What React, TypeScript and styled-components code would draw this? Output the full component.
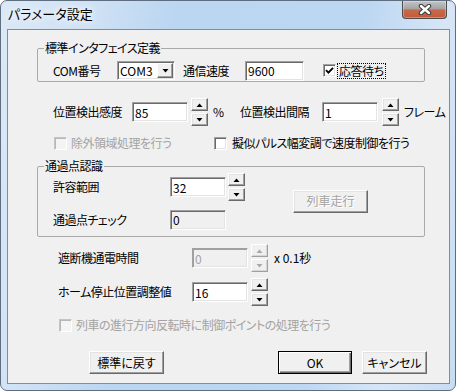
import React from "react";
import styled, {createGlobalStyle} from "styled-components";

const GlobalStyle = createGlobalStyle`
	html,
	body {
		margin: 0;
		padding: 0;
		background: #ffffff;
	}
	* {
		box-sizing: border-box;
	}
`;

const uiFont = `"Noto Sans CJK JP", "Liberation Sans", sans-serif`;

const Window = styled.div`
	width: 456px;
	height: 391px;
	display: flex;
	flex-direction: column;
	border: 1px solid #5e6e80;
	border-radius: 7px;
	overflow: hidden;
	background: linear-gradient(
		100deg,
		#dce9f6 0%,
		#cfe1f4 18%,
		#bad6f1 34%,
		#bcd7f2 70%,
		#d7e6f6 86%,
		#c8dcf2 100%
	);
	font-family: ${uiFont};
	font-size: 12px;
	line-height: 14px;
	letter-spacing: -0.5px;
	font-feature-settings: "palt";
	color: #000;
`;

const TitleBar = styled.div`
	height: 28px;
	flex: none;
	display: flex;
	justify-content: space-between;
	align-items: flex-start;
	padding: 0 8px 0 7px;
`;

const Title = styled.div`
	margin-top: 5px;
	font-size: 13px;
	line-height: 16px;
	letter-spacing: 0;
	text-shadow: 0 0 6px #fff, 0 0 10px #fff;
`;

const CloseButton = styled.div`
	width: 45px;
	height: 18px;
	display: flex;
	align-items: center;
	justify-content: center;
	border: 1px solid #4d4d4d;
	border-top: none;
	border-radius: 0 0 4px 4px;
	background: linear-gradient(
		#c4c4c4 0%,
		#a4a4a4 46%,
		#c96a4a 52%,
		#c35a38 100%
	);
	box-shadow: inset 0 0 0 1px rgba(255, 255, 255, 0.3);
`;

const Client = styled.div`
	flex: 1;
	margin: 0 5px 6px 6px;
	display: flex;
	flex-direction: column;
	background: #f0f0f0;
	border: 1px solid #7d8ea2;
`;

const GroupBox = styled.fieldset<{$top: number}>`
	margin: ${(p) => p.$top}px 0 0 29px;
	width: 388px;
	min-inline-size: 0;
	padding: 0;
	border: 1px solid #a9a9a9;
	border-radius: 2px;
`;

const Legend = styled.legend`
	margin-left: 6px;
	padding: 0 1px;
	line-height: 14px;
`;

const Row = styled.div<{$top: number; $left: number; $h: number}>`
	display: flex;
	align-items: center;
	height: ${(p) => p.$h}px;
	margin-top: ${(p) => p.$top}px;
	padding-left: ${(p) => p.$left}px;
	flex: none;
`;

const GroupBody = styled.div`
	display: flex;
	align-items: center;
	padding: 0 0 7px 15px;
`;

const Column = styled.div`
	display: flex;
	flex-direction: column;
`;

const Label = styled.span<{$w?: number; $gap?: number; $off?: boolean}>`
	flex: none;
	width: ${(p) => (p.$w ? `${p.$w}px` : "auto")};
	margin-left: ${(p) => p.$gap ?? 0}px;
	color: ${(p) => (p.$off ? "#a3a3a3" : "#000")};
	white-space: pre;
`;

const Unit = styled(Label)`
	letter-spacing: 0;
`;

const FocusLabel = styled.span`
	margin-left: 2px;
	padding: 0 1px;
	outline: 1px dotted #000;
	white-space: nowrap;
`;

const Edit = styled.input<{$w: number}>`
	flex: none;
	width: ${(p) => p.$w}px;
	height: 20px;
	padding: 0 2px;
	font: inherit;
	letter-spacing: 0;
	color: #000;
	background: #fff;
	border: 1px solid;
	border-color: #a0a0a0 #fff #fff #a0a0a0;
	box-shadow: inset 1px 1px 0 #696969, inset -1px -1px 0 #e3e3e3;
	outline: none;

	&:read-only {
		background: #f0f0f0;
	}

	&:disabled {
		color: #a3a3a3;
		box-shadow: inset 1px 1px 0 #a0a0a0, inset -1px -1px 0 #e3e3e3;
	}
`;

const ComboBox = styled.div<{$w: number}>`
	flex: none;
	width: ${(p) => p.$w}px;
	height: 19px;
	display: flex;
	align-items: stretch;
	background: #fff;
	border: 1px solid;
	border-color: #a0a0a0 #fff #fff #a0a0a0;
	box-shadow: inset 1px 1px 0 #696969, inset -1px -1px 0 #e3e3e3;
	padding: 1px 1px 1px 2px;
	letter-spacing: 0;
`;

const ComboText = styled.span`
	flex: 1;
	display: flex;
	align-items: center;
`;

const DropButton = styled.span`
	width: 16px;
	display: flex;
	align-items: center;
	justify-content: center;
	background: #f0f0f0;
	border: 1px solid;
	border-color: #fff #696969 #696969 #fff;
	box-shadow: inset -1px -1px 0 #a0a0a0;
`;

const SpinBox = styled.div<{$gap: number}>`
	flex: none;
	display: flex;
	flex-direction: column;
	gap: 2px;
	margin-left: ${(p) => p.$gap}px;
`;

const SpinButton = styled.button`
	width: 17px;
	height: 13px;
	padding: 0;
	display: flex;
	align-items: center;
	justify-content: center;
	color: #000;
	background: #f0f0f0;
	border: 1px solid;
	border-color: #fff #696969 #696969 #fff;
	box-shadow: inset -1px -1px 0 #a0a0a0, inset 1px 1px 0 #e3e3e3;

	&:disabled {
		color: #a8a8a8;
		border-color: #fff #a0a0a0 #a0a0a0 #fff;
		box-shadow: inset -1px -1px 0 #d6d6d6;
	}
`;

const CheckItem = styled.label<{$w?: number; $gap: number; $left?: number}>`
	flex: none;
	display: flex;
	align-items: center;
	width: ${(p) => (p.$w ? `${p.$w}px` : "auto")};
	gap: ${(p) => p.$gap}px;
	margin-left: ${(p) => p.$left ?? 0}px;
`;

const CheckBox = styled.span<{$off?: boolean}>`
	flex: none;
	width: 13px;
	height: 13px;
	display: flex;
	align-items: center;
	justify-content: center;
	background: ${(p) => (p.$off ? "#f4f4f4" : "#fff")};
	border: 1px solid;
	border-color: ${(p) =>
		p.$off ? "#c4c4c4 #fff #fff #c4c4c4" : "#a0a0a0 #fff #fff #a0a0a0"};
	box-shadow: ${(p) =>
		p.$off
			? "inset 1px 1px 0 #b8b8b8"
			: "inset 1px 1px 0 #696969, inset -1px -1px 0 #e3e3e3"};
`;

const PushButton = styled.button<{$w: number; $default?: boolean; $gap?: string}>`
	flex: none;
	width: ${(p) => p.$w}px;
	height: 23px;
	margin-left: ${(p) => p.$gap ?? "0"};
	padding: 0;
	font: inherit;
	color: #000;
	background: #f0f0f0;
	border: 1px solid;
	border-color: ${(p) =>
		p.$default ? "#000" : "#fff #696969 #696969 #fff"};
	box-shadow: ${(p) =>
		p.$default
			? "inset 1px 1px 0 #fff, inset -1px -1px 0 #696969, inset -2px -2px 0 #a0a0a0"
			: "inset -1px -1px 0 #a0a0a0, inset 1px 1px 0 #e3e3e3"};

	&:disabled {
		color: #a3a3a3;
		text-shadow: 1px 1px 0 #fff;
	}
`;

const ButtonBar = styled.div`
	display: flex;
	align-items: center;
	margin-top: 19px;
	padding: 0 22px 0 81px;
`;

const Arrow = ({down}: {down?: boolean}) => (
	<svg width="7" height="4" viewBox="0 0 7 4">
		<polygon
			points={down ? "0.5,0 6.5,0 3.5,3.5" : "0.5,4 6.5,4 3.5,0.5"}
			fill="currentColor"
		/>
	</svg>
);

const Spin = ({gap, disabled}: {gap: number; disabled?: boolean}) => (
	<SpinBox $gap={gap}>
		<SpinButton disabled={disabled}>
			<Arrow />
		</SpinButton>
		<SpinButton disabled={disabled}>
			<Arrow down />
		</SpinButton>
	</SpinBox>
);

const Check = () => (
	<svg width="9" height="9" viewBox="0 0 9 9">
		<polyline
			points="1,4.2 3.4,6.6 8,1.8"
			fill="none"
			stroke="#000"
			strokeWidth="1.9"
		/>
	</svg>
);

const CloseGlyph = () => (
	<svg width="14" height="11" viewBox="0 0 14 11">
		<path d="M3 2 L11 9 M11 2 L3 9" stroke="#3b3b3b" strokeWidth="4.4" strokeLinecap="round" />
		<path d="M3 2 L11 9 M11 2 L3 9" stroke="#fff" strokeWidth="2.4" strokeLinecap="round" />
	</svg>
);

export default function App() {
	return (
		<>
			<GlobalStyle />
			<Window>
				<TitleBar>
					<Title>パラメータ設定</Title>
					<CloseButton>
						<CloseGlyph />
					</CloseButton>
				</TitleBar>
				<Client>
					<GroupBox $top={11}>
						<Legend>標準インタフェイス定義</Legend>
						<Row $top={6} $left={15} $h={19}>
							<Label $w={64}>COM番号</Label>
							<ComboBox $w={58}>
								<ComboText>COM3</ComboText>
								<DropButton>
									<Arrow down />
								</DropButton>
							</ComboBox>
							<Label $w={62} $gap={8}>
								通信速度
							</Label>
							<Edit $w={59} defaultValue="9600" />
							<CheckItem $gap={0} $left={19}>
								<CheckBox>
									<Check />
								</CheckBox>
								<FocusLabel>応答待ち</FocusLabel>
							</CheckItem>
						</Row>
						<div style={{height: 1}} />
					</GroupBox>

					<Row $top={16} $left={45} $h={28}>
						<Label $w={79}>位置検出感度</Label>
						<Edit $w={56} defaultValue="85" />
						<Spin gap={3} />
						<Unit $w={27} $gap={5}>
							%
						</Unit>
						<Label $w={82}>位置検出間隔</Label>
						<Edit $w={56} defaultValue="1" />
						<Spin gap={4} />
						<Label $gap={5}>フレーム</Label>
					</Row>

					<Row $top={10} $left={46} $h={14}>
						<CheckItem $w={160} $gap={4}>
							<CheckBox $off />
							<Label $off>除外領域処理を行う</Label>
						</CheckItem>
						<CheckItem $gap={5}>
							<CheckBox />
							<Label>擬似パルス幅変調で速度制御を行う</Label>
						</CheckItem>
					</Row>

					<GroupBox $top={9}>
						<Legend>通過点認識</Legend>
						<GroupBody>
							<Column>
								<Row $top={0} $left={0} $h={28}>
									<Label $w={117}>許容範囲</Label>
									<Edit $w={56} defaultValue="32" />
									<Spin gap={2} />
								</Row>
								<Row $top={9} $left={0} $h={19}>
									<Label $w={117}>通過点チェック</Label>
									<Edit $w={56} defaultValue="0" readOnly />
								</Row>
							</Column>
							<PushButton $w={75} $gap="48px" disabled>
								列車走行
							</PushButton>
						</GroupBody>
					</GroupBox>

					<Row $top={7} $left={50} $h={28}>
						<Label $w={134}>遮断機通電時間</Label>
						<Edit $w={56} defaultValue="0" disabled />
						<Spin gap={3} disabled />
						<Unit $gap={6}>x 0.1秒</Unit>
					</Row>

					<Row $top={6} $left={50} $h={28}>
						<Label $w={134}>ホーム停止位置調整値</Label>
						<Edit $w={56} defaultValue="16" />
						<Spin gap={3} />
					</Row>

					<Row $top={12} $left={51} $h={14}>
						<CheckItem $gap={4}>
							<CheckBox $off />
							<Label $off>列車の進行方向反転時に制御ポイントの処理を行う</Label>
						</CheckItem>
					</Row>

					<ButtonBar>
						<PushButton $w={75}>標準に戻す</PushButton>
						<PushButton $w={74} $default $gap="auto">
							OK
						</PushButton>
						<PushButton $w={65} $gap="10px">
							キャンセル
						</PushButton>
					</ButtonBar>
				</Client>
			</Window>
		</>
	);
}
